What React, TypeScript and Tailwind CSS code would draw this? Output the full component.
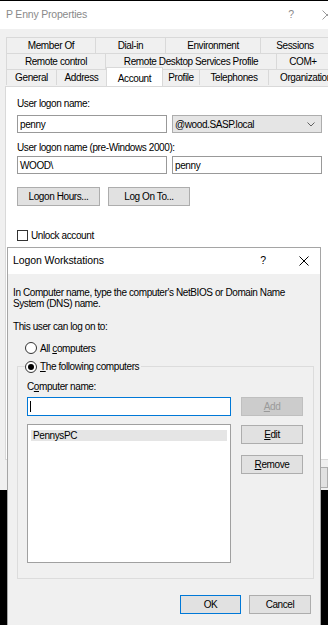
import React from 'react';

const font = "font-['Liberation_Sans',Arial,sans-serif]";

// small helpers for the win10 look
const Btn: React.FC<{ w: string; children: React.ReactNode; kind?: 'default' | 'disabled' }> = ({ w, children, kind }) => (
  <div
    className={`${w} h-[19px] flex items-center justify-center border text-[10px] tracking-[-0.4px] ${
      kind === 'default'
        ? 'border-[#0078d7] bg-[#e1e1e1] text-black'
        : kind === 'disabled'
          ? 'border-[#bfbfbf] bg-[#cccccc] text-[#9a9a9a]'
          : 'border-[#adadad] bg-[#e1e1e1] text-black'
    }`}
  >
    {children}
  </div>
);

const Tab: React.FC<{ w: string; label: string; first?: boolean }> = ({ w, label, first }) => (
  <div
    className={`${w} shrink-0 h-[16px] flex items-center justify-center border-t border-r border-[#d9d9d9] ${
      first ? 'border-l' : ''
    } text-[10px] tracking-[-0.4px] text-black whitespace-nowrap`}
  >
    {label}
  </div>
);

const Radio: React.FC<{ checked?: boolean }> = ({ checked }) => (
  <div className="w-[12px] h-[12px] rounded-full border border-[#333] bg-white flex items-center justify-center shrink-0">
    {checked && <div className="w-[6px] h-[6px] rounded-full bg-black" />}
  </div>
);

const CloseIcon: React.FC<{ color?: string }> = ({ color = '#000' }) => (
  <svg width="10" height="10" viewBox="0 0 10 10">
    <path d="M0.5 0.5L9.5 9.5M9.5 0.5L0.5 9.5" stroke={color} strokeWidth="1" />
  </svg>
);

export default function App() {
  return (
    <div className={`relative w-[328px] h-[625px] overflow-hidden bg-black pt-px ${font}`}>
      {/* P Enny Properties window */}
      <div className="w-[328px] h-[489px] bg-[#f0f0f0] flex flex-col">
        <div className="h-[28px] shrink-0 bg-white flex items-center pl-[6px] text-[10.5px] tracking-[-0.2px] text-[#8a8a8a]">
          <span>P Enny Properties</span>
          <span className="ml-auto w-[8px] text-center">?</span>
          <span className="ml-[27px] mr-[-4px]">
            <CloseIcon color="#9a9a9a" />
          </span>
        </div>

        <div className="pt-[8px] pl-[6px] flex flex-col">
          <div className="flex">
            <Tab w="w-[90px]" label="Member Of" first />
            <Tab w="w-[70px]" label="Dial-in" />
            <Tab w="w-[95px]" label="Environment" />
            <Tab w="w-[69px]" label="Sessions" />
          </div>
          <div className="flex">
            <Tab w="w-[100px]" label="Remote control" first />
            <Tab w="w-[171px]" label="Remote Desktop Services Profile" />
            <Tab w="w-[53px]" label="COM+" />
          </div>
          <div className="flex items-start">
            <Tab w="w-[51px]" label="General" first />
            <Tab w="w-[50px]" label="Address" />
            <div className="relative z-10 w-[57px] shrink-0 h-[19px] -mt-[2px] -ml-px flex items-start pt-[3px] justify-center border-t border-x border-[#d9d9d9] bg-white text-[10px] tracking-[-0.4px] text-black">
              Account
            </div>
            <Tab w="w-[37px]" label="Profile" />
            <Tab w="w-[69px]" label="Telephones" />
            <Tab w="w-[75px]" label="Organization" />
          </div>

          {/* account page */}
          <div className="-ml-px h-[374px] bg-white border-l border-y border-[#d9d9d9] pl-[11px] pt-[11px] flex flex-col text-[10px] tracking-[-0.4px] text-black">
            <div className="h-[12px] leading-[12px]">User logon name:</div>
            <div className="mt-[5px] flex gap-[5px]">
              <div className="w-[150px] h-[18px] border border-[#999] bg-white pl-[2px] flex items-center">penny</div>
              <div className="w-[150px] h-[18px] border border-[#adadad] bg-[#e5e5e5] pl-[2px] pr-[6px] flex items-center">
                <span>@wood.SASP.local</span>
                <svg className="ml-auto" width="8" height="5" viewBox="0 0 8 5">
                  <path d="M0.5 0.5L4 4L7.5 0.5" stroke="#606060" fill="none" strokeWidth="1" />
                </svg>
              </div>
            </div>
            <div className="mt-[9px] h-[12px] leading-[12px]">User logon name (pre-Windows 2000):</div>
            <div className="mt-[2px] flex gap-[5px]">
              <div className="w-[150px] h-[18px] border border-[#999] bg-white pl-[2px] flex items-center">WOOD\</div>
              <div className="w-[150px] h-[18px] border border-[#999] bg-white pl-[2px] flex items-center">penny</div>
            </div>
            <div className="mt-[13px] flex gap-[8px]">
              <Btn w="w-[83px]">Logon Hours...</Btn>
              <Btn w="w-[82px]">Log On To...</Btn>
            </div>
            <div className="mt-[23px] h-[12px] flex items-center gap-[3px]">
              <div className="w-[11px] h-[11px] border border-[#333] bg-white" />
              <span>Unlock account</span>
            </div>
          </div>

          {/* bottom buttons of the properties window, mostly hidden */}
          <div className="mt-[7px] flex">
            <div className="ml-[310px] w-[70px] h-[21px] border border-[#adadad] bg-[#e1e1e1]" />
          </div>
        </div>
      </div>

      {/* Logon Workstations dialog */}
      <div className="absolute left-[7px] top-[247px] w-[314px] h-[400px] border border-[#a5a5a5] bg-[#f0f0f0] flex flex-col text-black">
        <div className="h-[26px] shrink-0 bg-white flex items-center pl-[5px] pr-[11px] text-[10.5px] tracking-[-0.1px]">
          <span>Logon Workstations</span>
          <span className="ml-auto w-[10px] text-center">?</span>
          <span className="ml-[31px]">
            <CloseIcon />
          </span>
        </div>

        <div className="pl-[5px] pt-[13px] flex flex-col text-[10px] tracking-[-0.4px]">
          <div className="leading-[11px] whitespace-nowrap">
            In Computer name, type the computer's NetBIOS or Domain Name
            <br />
            System (DNS) name.
          </div>
          <div className="mt-[12px] h-[11px] leading-[11px]">This user can log on to:</div>
          <div className="mt-[10px] ml-[12px] h-[12px] flex items-center gap-[3px]">
            <Radio />
            <span>
              All <span className="underline">c</span>omputers
            </span>
          </div>

          {/* group box */}
          <div className="mt-[12px] ml-[4px] w-[297px] h-[213px] border border-[#dcdcdc] flex flex-col">
            <div className="-mt-[7px] ml-[7px] w-fit h-[13px] bg-[#f0f0f0] pr-[2px] flex items-center gap-[3px]">
              <Radio checked />
              <span>
                <span className="underline">T</span>he following computers
              </span>
            </div>
            <div className="pl-[9px] flex flex-col">
              <div className="mt-[8px] h-[12px] leading-[12px]">
                C<span className="underline">o</span>mputer name:
              </div>
              <div className="mt-[4px] flex gap-[10px]">
                <div className="w-[204px] h-[19px] border border-[#0078d7] bg-white flex items-center pl-[2px]">
                  <div className="w-px h-[11px] bg-black" />
                </div>
                <Btn w="w-[62px]" kind="disabled">
                  <span className="underline">A</span>dd
                </Btn>
              </div>
              <div className="mt-[8px] flex gap-[10px]">
                <div className="w-[204px] h-[139px] border border-[#a0a0a0] bg-white pt-[5px] px-[3px]">
                  <div className="h-[11px] bg-[#e5e5e5] pl-[2px] flex items-center">PennysPC</div>
                </div>
                <div className="mt-px flex flex-col gap-[11px]">
                  <Btn w="w-[62px]">
                    <span className="underline">E</span>dit
                  </Btn>
                  <Btn w="w-[62px]">
                    <span className="underline">R</span>emove
                  </Btn>
                </div>
              </div>
            </div>
          </div>

          <div className="mt-[16px] pr-[9px] flex justify-end gap-[8px]">
            <Btn w="w-[61px]" kind="default">OK</Btn>
            <Btn w="w-[62px]">Cancel</Btn>
          </div>
        </div>
      </div>
    </div>
  );
}
